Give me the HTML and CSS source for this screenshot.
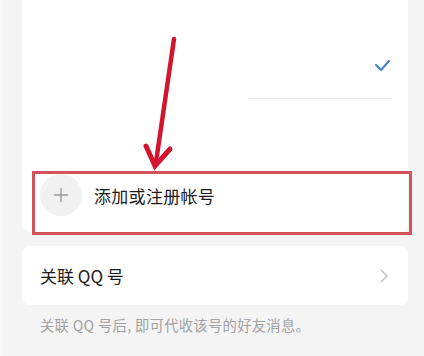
FILE: index.html
```html
<!DOCTYPE html>
<html lang="zh-CN">
<head>
    <meta charset="UTF-8">
    <meta name="viewport" content="width=device-width, initial-scale=1.0">
    <title>切换帐号</title>
    <link rel="stylesheet" href="styles.css">
</head>
<body>
    <div class="page">
        <section class="card accounts">
            <div class="account-row">
                <svg class="check" width="18" height="14" viewBox="0 0 18 14">
                    <polyline points="2,6 7,11 15,2" fill="none" stroke="#3f83cf" stroke-width="2" stroke-linecap="round" stroke-linejoin="round"/>
                </svg>
            </div>
            <div class="divider"></div>
            <div class="add-row">
                <div class="plus-circle">
                    <svg width="16" height="16" viewBox="0 0 16 16">
                        <path d="M8 1v14M1 8h14" stroke="#9a9a9a" stroke-width="1.4"/>
                    </svg>
                </div>
                <span class="add-label">添加或注册帐号</span>
            </div>
        </section>

        <section class="card link-qq">
            <span class="link-label">关联 QQ 号</span>
            <svg class="chevron" width="8" height="14" viewBox="0 0 8 14">
                <polyline points="1,1 7,7 1,13" fill="none" stroke="#bdbdbd" stroke-width="1.4"/>
            </svg>
        </section>
        <p class="note">关联 QQ 号后, 即可代收该号的好友消息。</p>

        <!-- annotation overlay -->
        <div class="highlight-box"></div>
        <svg class="arrow" width="424" height="356" viewBox="0 0 424 356">
            <line x1="174" y1="39" x2="156" y2="162" stroke="#d1152d" stroke-width="4.5" stroke-linecap="round"/>
            <polyline points="146,146 155,166 170,149" fill="none" stroke="#d1152d" stroke-width="5" stroke-linecap="round" stroke-linejoin="miter"/>
        </svg>
    </div>
</body>
</html>
```

FILE: styles.css
```css
body, html {
    margin: 0;
    padding: 0;
    background-color: #f4f4f4;
    font-family: "Noto Sans CJK SC", "Noto Sans", sans-serif;
    color: #1b1b1b;
    overflow: hidden;
}
.page {
    position: relative;
    height: 356px;
    padding: 0 16px 0 22px;
    box-shadow: inset 3px 0 #f9f9f9;
    box-sizing: border-box;
}
.card {
    background-color: #fff;
    border-radius: 8px;
}
.accounts {
    height: 232px;
    border-radius: 0 0 8px 8px;
}
.account-row {
    height: 98px;
    display: flex;
    justify-content: flex-end;
    align-items: flex-start;
    padding-right: 16px;
    box-sizing: border-box;
}
.check {
    margin-top: 59px;
}
.divider {
    height: 1px;
    background-color: #ececec;
    margin: 0 16px 0 226px;
}
.add-row {
    display: flex;
    align-items: center;
    padding: 75px 0 0 18px;
}
.plus-circle {
    width: 42px;
    height: 42px;
    border-radius: 50%;
    background-color: #f1f1f1;
    display: flex;
    align-items: center;
    justify-content: center;
}
.plus-circle svg {
    width: 16px;
    height: 16px;
}
.add-label {
    margin-left: 12px;
    font-size: 17px;
    letter-spacing: 0.3px;
}
.link-qq {
    margin-top: 14px;
    height: 59px;
    display: flex;
    align-items: center;
    justify-content: space-between;
    padding: 0 20px 0 18px;
}
.link-label {
    font-size: 17px;
}
.note {
    margin: 9px 0 0 18px;
    font-size: 14.3px;
    letter-spacing: 0.3px;
    color: #a2a2a2;
}
.highlight-box {
    position: absolute;
    left: 32px;
    top: 171px;
    width: 380px;
    height: 64px;
    border: 3.5px solid #d4535a;
    box-sizing: border-box;
}
.arrow {
    position: absolute;
    left: 0;
    top: 0;
    pointer-events: none;
}
```
